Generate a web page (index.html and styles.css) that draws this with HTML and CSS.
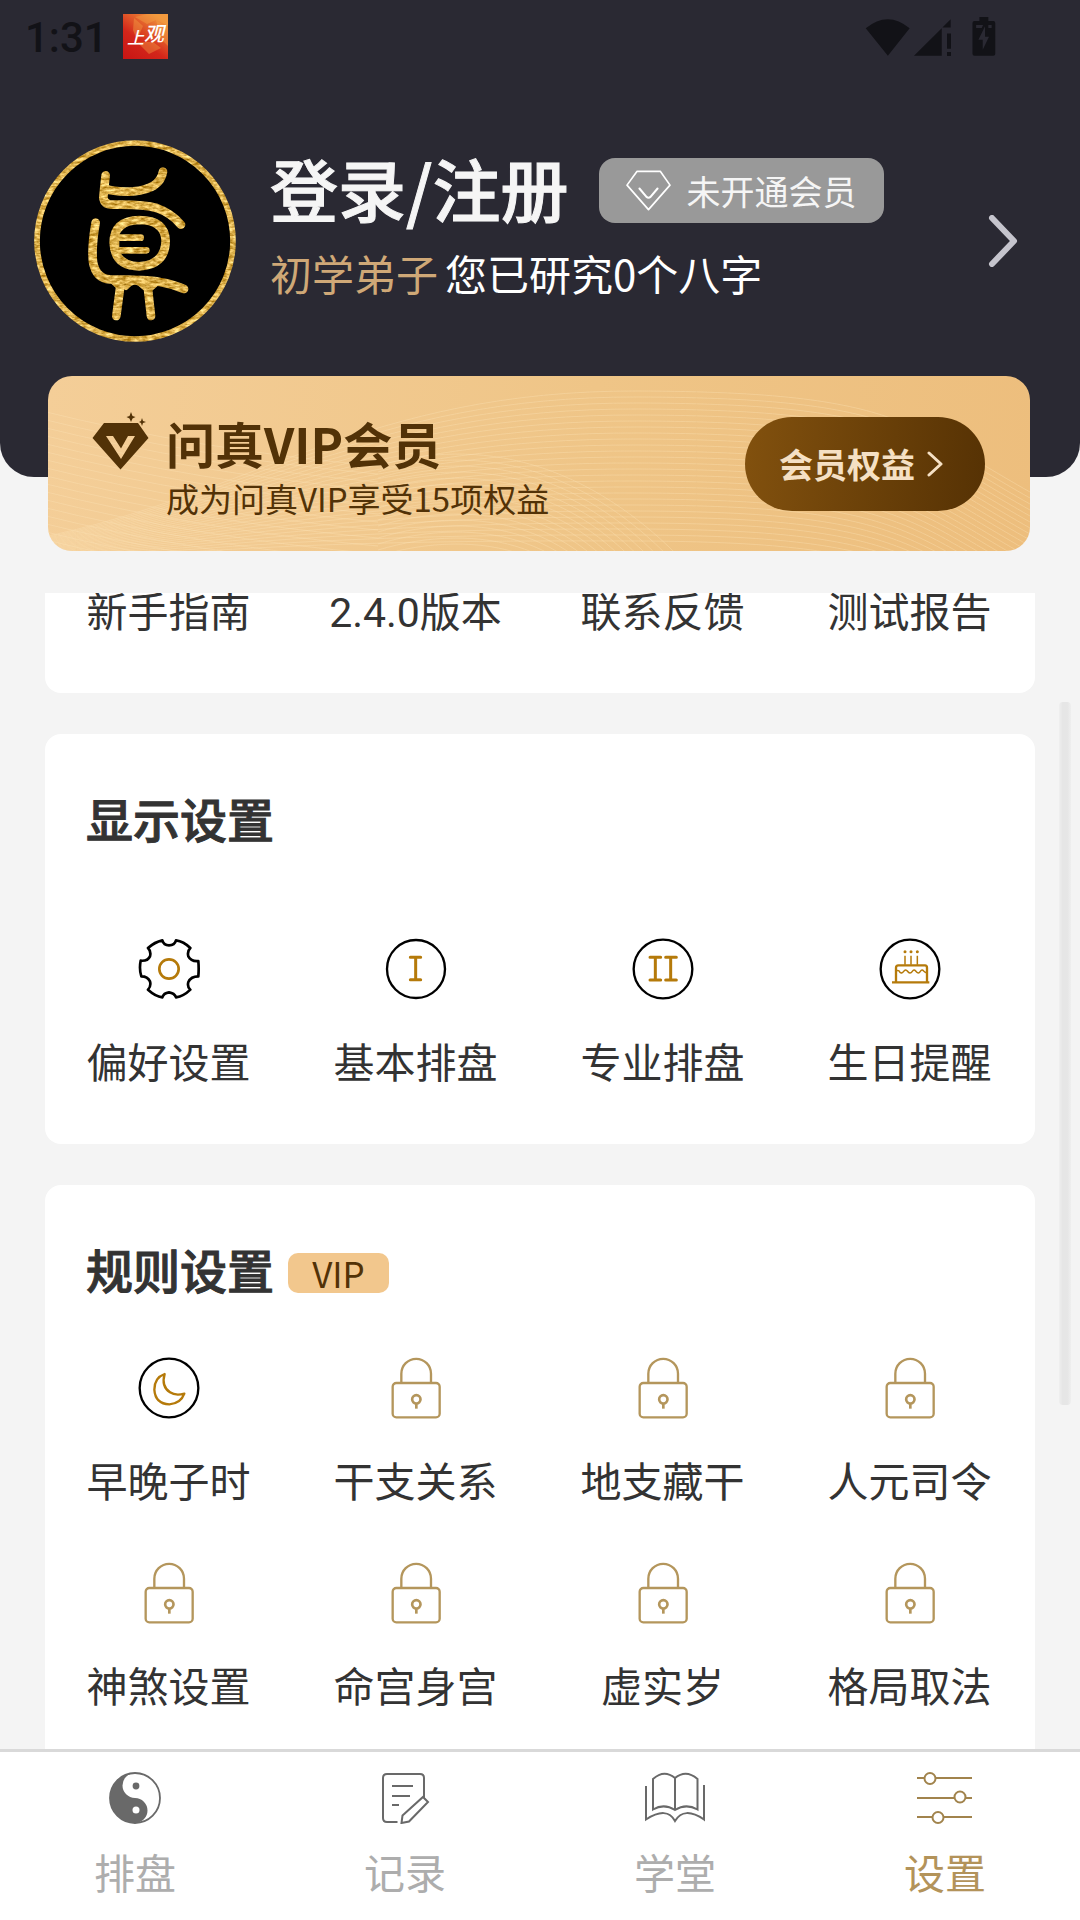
FILE: index.html
```html
<!DOCTYPE html>
<html lang="zh-CN">
<head>
<meta charset="utf-8">
<meta name="viewport" content="width=device-width, initial-scale=1">
<title>设置</title>
<link rel="stylesheet" href="styles.css">
</head>
<body>
<svg class="defs" aria-hidden="true">
  <defs>
    <symbol id="lock" viewBox="973 406 186 186">
      <g fill="none" stroke="#b4965c" stroke-width="7">
        <rect x="996" y="484" width="141" height="103" rx="11"/>
        <path d="M1022 481V456a44.500 44.500 0 0 1 89 0V481"/>
        <circle cx="1067" cy="533" r="12.500" stroke-width="8"/>
        <path d="M1067 546V561" stroke-width="8"/>
      </g>
    </symbol>
  </defs>
</svg>
<div class="app">
  <header class="header">
    <div class="status">
      <span class="time">1:31</span>
      <svg class="status-app" viewBox="0 0 45 45" aria-label="上观">
        <defs><linearGradient id="red" x1="0" y1="1" x2=".7" y2="0"><stop offset="0" stop-color="#c81414"/><stop offset=".45" stop-color="#d3261a"/><stop offset="1" stop-color="#f0923a"/></linearGradient></defs>
        <path fill="url(#red)" d="M0 0h45v45H0z"/>
        <path fill="#f6a545" opacity=".4" d="M12 3 24 0h21v12L33 6 24 10zM33 6l12 8v18l-8-8zM11 4l9 8-6 14-4-10zM14 28l12 12 12-6-8-6z"/>
        <text x="4" y="30" class="logo-text">上</text>
        <text x="21" y="27" class="logo-text logo-big">观</text>
      </svg>
      <svg class="status-icons" viewBox="855 45 394 118" aria-hidden="true">
        <g fill="#121217">
          <path d="M923 162 856 79Q923 24 989 79ZM1002 162 1086 79V162ZM1088 77 1113 52V77ZM1102 95h12v46h-12zM1102 151h12v12h-12z"/>
          <path fill-rule="evenodd" d="M1200 45h27v12h15q6 0 6 6v93q0 6-6 6h-57q-6 0-6-6V63q0-6 6-6h15zM1217 73l-20 41h13v30l19-39h-12zM1190 69v9h17l4-9zM1227 69v9h10v-9z"/>
        </g>
      </svg>
    </div>
    <a class="profile" href="#login">
      <svg class="avatar" viewBox="102 420 606 606" aria-hidden="true">
        <defs>
          <filter id="gold" x="90" y="410" width="630" height="630" filterUnits="userSpaceOnUse" color-interpolation-filters="sRGB">
            <feTurbulence type="fractalNoise" baseFrequency=".05 .12" numOctaves="3" seed="4"/>
            <feColorMatrix values=".7 0 0 0 .52  .8 0 0 0 .3  .9 0 0 0 -.14  0 0 0 0 1"/>
            <feComposite in2="SourceGraphic" operator="in"/>
          </filter>
        </defs>
        <circle cx="405" cy="723" r="300" fill="#000"/>
        <g filter="url(#gold)" fill="none" stroke="#dcae45" stroke-width="26" stroke-linecap="round" stroke-linejoin="round">
          <circle cx="405" cy="723" r="294" stroke-width="17"/>
          <path d="M317 526Q313 560 310 592Q312 614 338 614Q430 612 470 624Q515 640 543 674"/>
          <path d="M316 566Q345 577 400 574Q480 567 489 515"/>
          <path d="M287 668Q274 740 279 786Q288 836 330 838Q440 838 480 846Q520 853 552 867"/>
          <path d="M362 850 349 948M442 850 453 948"/>
          <path d="M418 660Q342 662 341 728Q344 798 418 799Q496 794 497 722Q494 660 418 660Z"/>
          <path stroke-width="20" d="M355 713H422M355 751H439"/>
          <path stroke-width="16" d="M350 690V770M340 846 357 862M378 862Q404 830 432 862M470 850 454 864"/>
        </g>
      </svg>
      <div class="who">
        <div class="who-top">
          <span class="name">登录/注册</span>
          <span class="member-tag">
            <svg class="tag-gem" viewBox="138 512 134 122" aria-hidden="true"><g fill="none" stroke="#fff" stroke-width="5" stroke-linejoin="round" stroke-linecap="round"><path d="M171 516H240L269 557 205 630 141 557Z"/><path d="M178 567 199 592Q205 597 211 592L232 567" stroke-width="6"/></g></svg>
            未开通会员
          </span>
        </div>
        <div class="who-sub"><span class="rank">初学弟子</span><span>您已研究0个八字</span></div>
      </div>
      <svg class="go" viewBox="0 0 30 52" aria-hidden="true"><path d="M4 3 26 26 4 49" fill="none" stroke="#c5c4cd" stroke-width="6" stroke-linecap="round" stroke-linejoin="round"/></svg>
    </a>
    <section class="vip">
      <svg class="waves" viewBox="0 0 982 175" preserveAspectRatio="none" aria-hidden="true"><g id="waves" fill="none" stroke="#fbe2b8" stroke-opacity=".36"></g></svg>
      <svg class="vip-gem" viewBox="92 412 58 58" aria-hidden="true">
        <path fill="#523207" fill-rule="evenodd" d="M104 423H138L148.500 438 120.500 469.500 92.500 438ZM106 436 121 459 135 436H128L121 448.500 113 436ZM131 412 132.500 416 135.500 417 132.500 418.500 131 422 129.500 418.500 126.500 417 129.500 416ZM142 418 143 421 146 422 143 423 142 426 141 423 139 422 141 421Z"/>
      </svg>
      <div class="vip-text">
        <h2 class="vip-title">问真VIP会员</h2>
        <p class="vip-sub">成为问真VIP享受15项权益</p>
      </div>
      <button class="vip-button" type="button">会员权益
        <svg class="vip-arrow" viewBox="0 0 16 26" aria-hidden="true"><path d="M2 2 14 13 2 24" fill="none" stroke="#f5e0c4" stroke-width="3" stroke-linecap="round" stroke-linejoin="round"/></svg>
      </button>
    </section>
  </header>

  <main class="scroller">
    <section class="card card-cut">
      <div class="grid">
        <a class="item" href="#guide">新手指南</a>
        <a class="item" href="#version">2.4.0版本</a>
        <a class="item" href="#contact">联系反馈</a>
        <a class="item" href="#report">测试报告</a>
      </div>
    </section>

    <section class="card">
      <h2 class="card-title">显示设置</h2>
      <div class="grid grid-low">
        <a class="item" href="#prefs">
          <svg class="icon" viewBox="173 475 186 186" aria-hidden="true"><path fill="none" stroke="#000" stroke-width="8" stroke-linejoin="round" d="M246 482Q250 497 266 497Q283 497 287 482Q310 485 330 505Q320 515 324 530Q332 546 354 544Q356 568 354 590Q332 590 324 607Q320 622 330 630Q310 650 287 653Q282 640 266 638Q250 640 246 653Q225 650 203 630Q213 620 209 605Q202 590 183 590Q176 568 181 543Q202 545 209 530Q213 515 203 505Q223 487 246 482Z"/><circle cx="266" cy="568" r="29" fill="none" stroke="#b57a0a" stroke-width="8"/></svg>
          偏好设置</a>
        <a class="item" href="#basic">
          <svg class="icon" viewBox="912 474 186 186" aria-hidden="true"><circle cx="1005" cy="567" r="87" fill="none" stroke="#000" stroke-width="7"/><path d="M988 532H1019M988 599H1019M1004 532V599" stroke="#b57a0a" stroke-width="9" stroke-linecap="round"/></svg>
          基本排盘</a>
        <a class="item" href="#pro">
          <svg class="icon" viewBox="214 115 186 186" aria-hidden="true"><circle cx="307" cy="208" r="88" fill="none" stroke="#000" stroke-width="7"/><path d="M268 173H300M268 241H300M284 173V241M315 173H347M315 241H347M330 173V241" stroke="#b57a0a" stroke-width="9" stroke-linecap="round"/></svg>
          专业排盘</a>
        <a class="item" href="#birthday">
          <svg class="icon" viewBox="958 115 186 186" aria-hidden="true"><circle cx="1051" cy="208" r="88" fill="none" stroke="#000" stroke-width="7"/><g fill="none" stroke="#b57a0a" stroke-width="7"><path d="M997 248H1109M1009 248V204Q1009 197 1016 197H1096Q1102 197 1102 204V248"/><path stroke-width="4.500" d="M1011 213Q1018 211 1021 218Q1027 223 1034 213Q1038 208 1043 214Q1051 226 1058 215Q1063 208 1068 214Q1076 225 1082 215Q1087 208 1092 214Q1096 218 1100 219M1036 168V195M1054 168V195M1073 168V195"/></g><g fill="#b57a0a"><circle cx="1036" cy="156" r="4.500"/><circle cx="1054" cy="156" r="4.500"/><circle cx="1073" cy="156" r="4.500"/></g></svg>
          生日提醒</a>
      </div>
    </section>

    <section class="card">
      <h2 class="card-title">规则设置<span class="vip-tag">VIP</span></h2>
      <div class="grid">
        <a class="item" href="#hour">
          <svg class="icon" viewBox="232 406 186 186" aria-hidden="true"><circle cx="325" cy="499" r="88" fill="none" stroke="#000" stroke-width="7"/><path fill="none" stroke="#b57a0a" stroke-width="7" stroke-linejoin="round" d="M312 457Q281 468 281 504Q284 547 326 548Q360 546 371 516Q344 523 328 512Q301 494 312 457Z"/></svg>
          早晚子时</a>
        <a class="item" href="#relations"><svg class="icon" aria-hidden="true"><use href="#lock"/></svg>干支关系</a>
        <a class="item" href="#hidden-stems"><svg class="icon" aria-hidden="true"><use href="#lock"/></svg>地支藏干</a>
        <a class="item" href="#renyuan"><svg class="icon" aria-hidden="true"><use href="#lock"/></svg>人元司令</a>
        <a class="item" href="#shensha"><svg class="icon" aria-hidden="true"><use href="#lock"/></svg>神煞设置</a>
        <a class="item" href="#palaces"><svg class="icon" aria-hidden="true"><use href="#lock"/></svg>命宫身宫</a>
        <a class="item" href="#age"><svg class="icon" aria-hidden="true"><use href="#lock"/></svg>虚实岁</a>
        <a class="item" href="#pattern"><svg class="icon" aria-hidden="true"><use href="#lock"/></svg>格局取法</a>
      </div>
    </section>
  </main>
  <div class="thumb"></div>

  <nav class="tabs">
    <a class="tab" href="#chart">
      <svg class="tab-icon" viewBox="0 0 60 52" aria-hidden="true"><circle cx="30" cy="26" r="25" fill="#fff" stroke="#696969" stroke-width="1.800"/><path fill="#696969" d="M30 1A25 25 0 0 0 30 51A12.500 12.500 0 0 0 30 26A12.500 12.500 0 0 1 30 1Z"/><circle cx="31" cy="14" r="3.400" fill="#696969"/><circle cx="31" cy="38" r="3.500" fill="#fff"/></svg>
      排盘</a>
    <a class="tab" href="#records">
      <svg class="tab-icon" viewBox="0 0 60 52" aria-hidden="true"><path fill="none" stroke="#696969" stroke-width="2" d="M22.500 50H12Q8 50 8 46V6Q8 2 12 2H45Q49 2 49 6V26M17 14H38M17 24H35M17 33H24M26.500 51 27.500 43.500 48 25 53 30 34 49.500Z"/></svg>
      记录</a>
    <a class="tab" href="#school">
      <svg class="tab-icon" viewBox="0 0 60 52" aria-hidden="true"><path fill="none" stroke="#696969" stroke-width="2" d="M30 6Q19-3 8 7V37.500Q19 31 30 38Q41 31 52.500 37.500V7Q41-3 30 6ZM30 6V38M1 14V47.500Q22 34 30 49Q39 34 59 47.500V13"/></svg>
      学堂</a>
    <a class="tab tab-active" href="#settings" aria-current="page">
      <svg class="tab-icon" viewBox="0 0 60 52" aria-hidden="true"><g fill="#fff" stroke="#a1834c" stroke-width="2"><path d="M2 6H57M2 26H57M2 45H57"/><circle cx="15" cy="6.500" r="5.500"/><circle cx="45" cy="25" r="5.500"/><circle cx="23" cy="45.500" r="5.500"/></g></svg>
      设置</a>
  </nav>
</div>
<script src="waves.js"></script>
</body>
</html>
```
FILE: waves.js
```js
// Fans of thin curves behind the membership banner.
const group = document.getElementById('waves');

function line(d) {
  const path = document.createElementNS('http://www.w3.org/2000/svg', 'path');
  path.setAttribute('d', d);
  group.appendChild(path);
}

for (let i = 0; i < 26; i++) {
  const k = i * 6;
  line(`M-10 ${162 + i} C 200 ${120 + i * 2}, 320 ${14 + k}, 590 ${15 + k} S 860 ${50 + k}, 1000 ${126 + k}`);
}
for (let i = 0; i < 20; i++) {
  const k = i * 8;
  line(`M-10 ${34 + k} Q 150 ${74 + k}, 330 ${90 + k}`);
}
for (let i = 0; i < 16; i++) {
  const k = i * 6;
  line(`M330 ${90 + k} C 430 ${60 + k}, 540 ${84 + k}, ${640 - i * 5} ${190 + k}`);
}
```
FILE: styles.css
```css
* {
  box-sizing: border-box;
}

body {
  margin: 0;
  background: #f4f4f4;
  color: #333;
  font-family: "Noto Sans CJK SC", sans-serif;
}

h2,
p {
  margin: 0;
}

a {
  color: inherit;
  text-decoration: none;
}

svg {
  display: block;
  flex: none;
}

.defs {
  position: absolute;
  width: 0;
  height: 0;
}

.app {
  position: relative;
  display: flex;
  flex-direction: column;
  height: 100vh;
}

/* header */
.header {
  display: flow-root;
  flex: none;
  margin-bottom: 116px;
  background: #2a2933;
  border-radius: 0 0 34px 34px;
}

.status {
  display: flex;
  align-items: center;
  height: 72px;
  padding: 0 84px 0 25px;
}

.time {
  padding-top: 4px;
  color: #121217;
  font: 500 42px/50px Roboto, sans-serif;
}

.status-app {
  width: 45px;
  height: 45px;
  margin-left: 15px;
}

.logo-text {
  fill: #fff;
  font-size: 17px;
  font-style: italic;
  font-weight: 500;
}

.logo-big {
  font-size: 20px;
}

.status-icons {
  width: 131px;
  height: 39px;
  margin-left: auto;
}

.profile {
  display: flex;
  align-items: center;
  padding: 68px 62px 34px 34px;
}

.avatar {
  width: 202px;
  height: 202px;
}

.who {
  flex: 1;
  align-self: flex-start;
  padding: 13px 0 0 34px;
}

.who-top {
  display: flex;
  align-items: flex-end;
  gap: 30px;
}

.name {
  color: #f5f5f5;
  font-size: 68px;
  font-weight: 500;
  line-height: 70px;
  -webkit-text-stroke: 1px;
}

.member-tag {
  display: flex;
  align-items: center;
  gap: 16px;
  height: 65px;
  padding: 0 27px;
  border-radius: 16px;
  background: #999;
  color: #f5f5f5;
  font-size: 34px;
}

.tag-gem {
  width: 45px;
  height: 41px;
}

.who-sub {
  display: flex;
  gap: 7px;
  margin-top: 25px;
  color: #fff;
  font-size: 42px;
  line-height: 50px;
}

.rank {
  color: #cfa877;
}

.go {
  width: 30px;
  height: 52px;
}

/* membership banner */
.vip {
  position: relative;
  display: flex;
  align-items: center;
  height: 175px;
  margin: 0 50px -74px 48px;
  padding: 0 45px 0 44px;
  overflow: hidden;
  border-radius: 24px;
  background: linear-gradient(95deg, #f4ce98, #efc587 55%, #edbe7d);
  color: #523207;
}

.waves {
  position: absolute;
  inset: 0;
  width: 100%;
  height: 100%;
}

.vip-gem {
  position: relative;
  width: 58px;
  height: 58px;
  margin-bottom: 46px;
}

.vip-text {
  position: relative;
  flex: 1;
  padding: 9px 0 0 16px;
}

.vip-title {
  font-size: 49px;
  font-weight: 700;
  line-height: 60px;
}

.vip-sub {
  font-size: 33px;
  line-height: 50px;
}

.vip-button {
  position: relative;
  display: flex;
  align-items: center;
  justify-content: center;
  gap: 12px;
  width: 240px;
  height: 94px;
  padding: 0 8px 0 0;
  border: 0;
  border-radius: 47px;
  background: linear-gradient(95deg, #82510e, #563204);
  color: #f5e0c4;
  font: 700 34px/50px "Noto Sans CJK SC", sans-serif;
}

.vip-arrow {
  width: 16px;
  height: 26px;
}

/* settings list */
.scroller {
  flex: 1;
  min-height: 0;
  padding: 0 45px;
  overflow-y: auto;
  scrollbar-width: none;
}

.card {
  margin-bottom: 41px;
  padding: 54px 0 55px;
  border-radius: 16px;
  background: #fff;
}

.card-cut {
  margin-top: -5px;
  padding-top: 0;
  border-radius: 0 0 16px 16px;
}

.card-title {
  display: flex;
  align-items: center;
  gap: 14px;
  margin-bottom: 58px;
  padding-left: 41px;
  font-size: 47px;
  font-weight: 500;
  line-height: 60px;
  -webkit-text-stroke: 1px;
}

.vip-tag {
  height: 40px;
  width: 101px;
  margin-top: 8px;
  border-radius: 10px;
  background: #f2c78d;
  color: #523207;
  font-size: 35px;
  font-weight: 400;
  line-height: 40px;
  text-align: center;
  -webkit-text-stroke: 0;
}

.grid {
  display: grid;
  grid-template-columns: repeat(4, 1fr);
  row-gap: 54px;
  padding-right: 2px;
}

.grid-low {
  padding-top: 32px;
}

.item {
  display: flex;
  flex-direction: column;
  align-items: center;
  gap: 39px;
  font-family: Roboto, "Noto Sans CJK SC", sans-serif;
  font-size: 41px;
  line-height: 50px;
}

.icon {
  width: 62px;
  height: 62px;
}

.thumb {
  position: absolute;
  top: 702px;
  right: 9px;
  width: 12px;
  height: 703px;
  border-radius: 4px;
  background: linear-gradient(90deg, #efefef, #e6e6e6 30%, #e6e6e6 70%, #efefef);
}

/* bottom tabs */
.tabs {
  display: grid;
  flex: none;
  grid-template-columns: repeat(4, 1fr);
  border-top: 3px solid #d9d9d9;
  background: #fff;
}

.tab {
  display: flex;
  flex-direction: column;
  align-items: center;
  gap: 22px;
  padding: 20px 0 24px;
  color: #adadad;
  font-size: 41px;
  line-height: 50px;
}

.tab-icon {
  width: 60px;
  height: 52px;
}

.tab-active {
  color: #b3935a;
}
```
